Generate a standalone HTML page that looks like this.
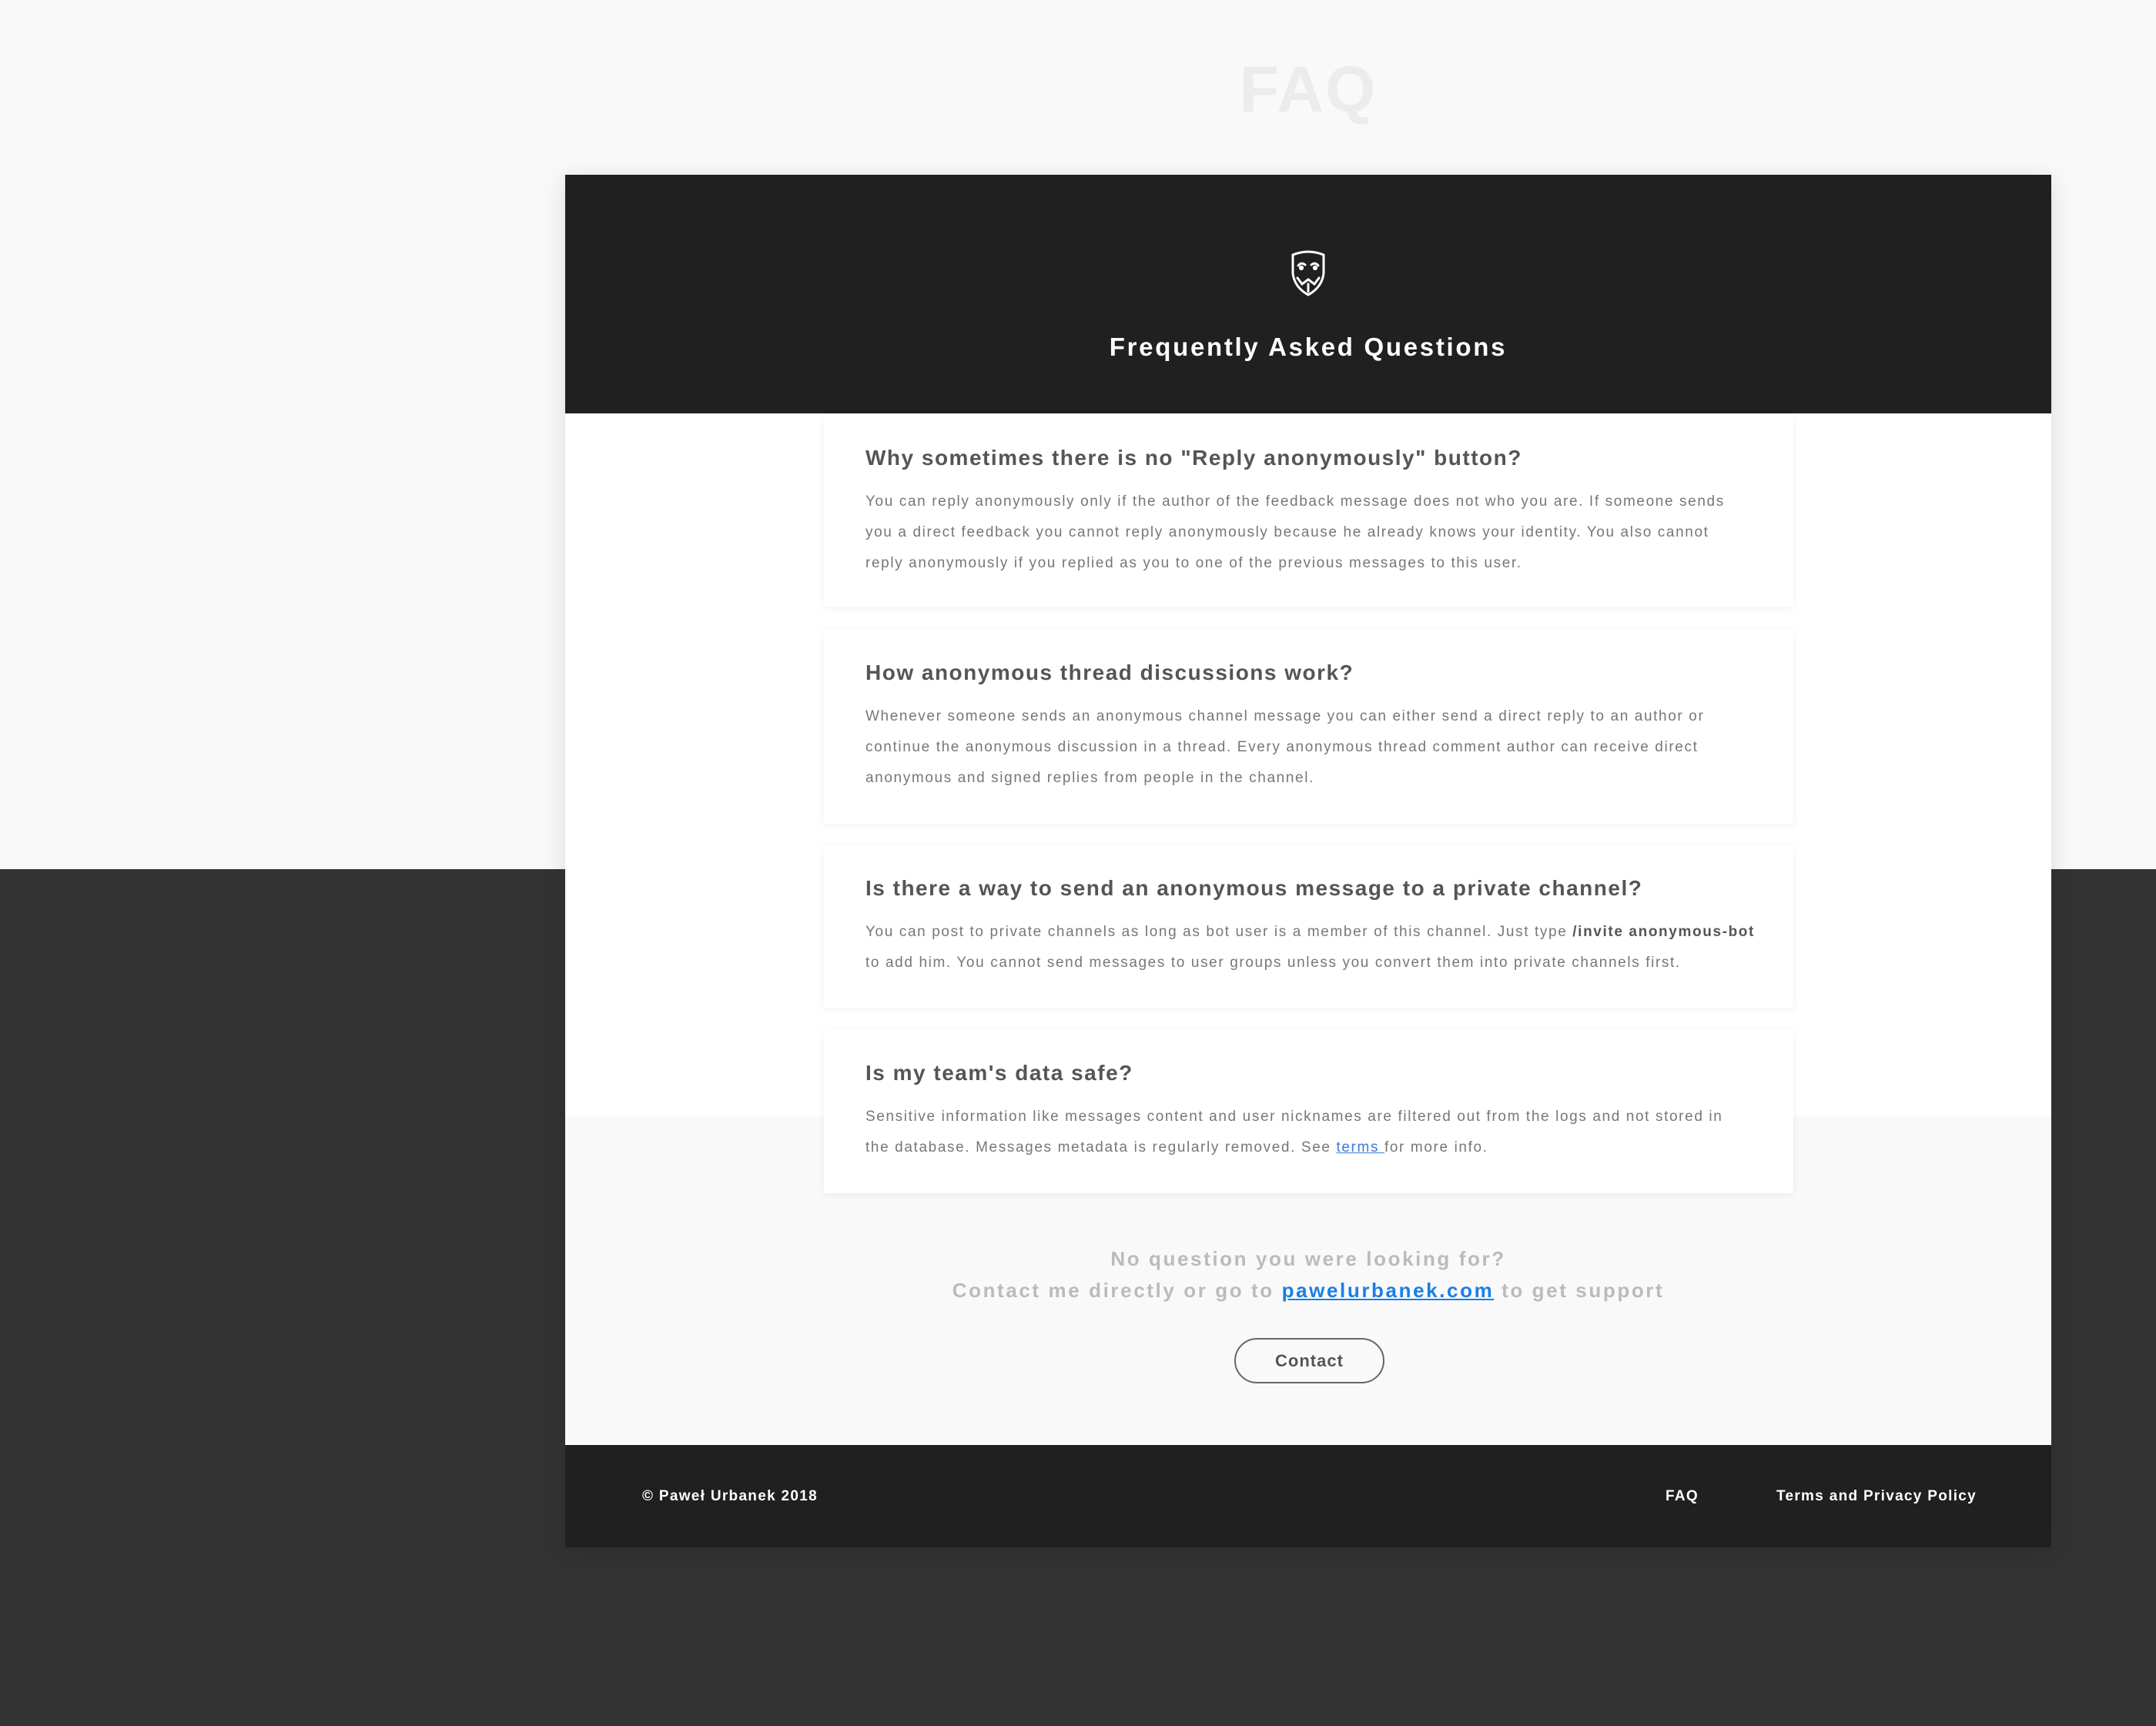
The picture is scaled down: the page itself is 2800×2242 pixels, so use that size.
<!DOCTYPE html>
<html><head><meta charset="utf-8"><style>
*{margin:0;padding:0;box-sizing:border-box}
body{width:2800px;height:2242px;position:relative;font-family:"Liberation Sans",sans-serif;background:#333;overflow:hidden}
.top{position:absolute;left:0;top:0;width:2800px;height:1129px;background:#f9f9f9}
.faqt{position:absolute;left:734px;width:1930px;top:68px;text-align:center;font-size:84px;font-weight:bold;color:#ececec;letter-spacing:2px}
.frame{position:absolute;left:734px;top:227px;width:1930px;height:1783px;background:#f9f9f9;box-shadow:0 6px 30px rgba(0,0,0,.12)}
.hdr{position:absolute;left:0;top:0;width:1930px;height:310px;background:#202020}
.hdr h1{position:absolute;top:205px;width:100%;text-align:center;color:#fff;font-size:33px;letter-spacing:2.7px;font-weight:bold}
.white{position:absolute;left:0;top:310px;width:1930px;height:913px;background:#fff}
.card{position:absolute;left:336px;width:1259px;background:#fff;box-shadow:0 2px 10px rgba(0,0,0,.06);padding:0 0 0 54px}
.card h2{position:absolute;left:54px;font-size:28px;letter-spacing:1.5px;color:#555;font-weight:bold;white-space:nowrap}
.card p{position:absolute;left:54px;font-size:19px;letter-spacing:1.62px;line-height:40px;color:#777;white-space:nowrap}
.card b{color:#555}
.card a{color:#3a7bd5;text-decoration:underline}
.cta{position:absolute;left:0;width:1930px;text-align:center;color:#bbb;font-size:26px;font-weight:bold;letter-spacing:2.6px}
.cta a{color:#1a7fe6;text-decoration:underline}
.btn{position:absolute;left:869px;top:1511px;width:195px;height:59px;border:2px solid #666;border-radius:30px;text-align:center;line-height:55px;font-size:22px;font-weight:bold;color:#555;letter-spacing:1px}
.ftr{position:absolute;left:0;top:1650px;width:1930px;height:133px;background:#202020;color:#fff;font-size:19px;font-weight:bold;letter-spacing:1.3px}
.ftr span{position:absolute;top:56px}
</style></head><body>
<div class="top"></div>
<div class="faqt">FAQ</div>
<div class="frame">
 <div class="hdr">
  <svg style="position:absolute;left:941px;top:98px" width="48" height="60" viewBox="0 0 48 60" fill="none" stroke="#fff" stroke-width="3" stroke-linecap="round">
   <path d="M4 6 Q24 -2 44 6 L44 30 Q42 48 24 58 Q6 48 4 30 Z"/>
   <path d="M11 20 Q15 15 20 19"/><path d="M28 19 Q33 15 37 20"/>
   <circle cx="15" cy="23" r="1.6" fill="#fff"/><circle cx="33" cy="23" r="1.6" fill="#fff"/>
   <path d="M10 36 L16 44 L24 38 L32 44 L38 36"/><path d="M24 44 L24 54"/>
  </svg>
  <h1>Frequently Asked Questions</h1>
 </div>
 <div class="white"></div>
 <div class="card" style="top:312px;height:249px">
  <h2 style="top:40px">Why sometimes there is no "Reply anonymously" button?</h2>
  <p style="top:93px">You can reply anonymously only if the author of the feedback message does not who you are. If someone sends<br>you a direct feedback you cannot reply anonymously because he already knows your identity. You also cannot<br>reply anonymously if you replied as you to one of the previous messages to this user.</p>
 </div>
 <div class="card" style="top:591px;height:252px">
  <h2 style="top:40px">How anonymous thread discussions work?</h2>
  <p style="top:93px">Whenever someone sends an anonymous channel message you can either send a direct reply to an author or<br>continue the anonymous discussion in a thread. Every anonymous thread comment author can receive direct<br>anonymous and signed replies from people in the channel.</p>
 </div>
 <div class="card" style="top:871px;height:211px">
  <h2 style="top:40px">Is there a way to send an anonymous message to a private channel?</h2>
  <p style="top:93px">You can post to private channels as long as bot user is a member of this channel. Just type <b>/invite anonymous-bot</b><br>to add him. You cannot send messages to user groups unless you convert them into private channels first.</p>
 </div>
 <div class="card" style="top:1111px;height:212px">
  <h2 style="top:40px">Is my team's data safe?</h2>
  <p style="top:93px">Sensitive information like messages content and user nicknames are filtered out from the logs and not stored in<br>the database. Messages metadata is regularly removed. See <a>terms </a>for more info.</p>
 </div>
 <div class="cta" style="top:1393px">No question you were looking for?</div>
 <div class="cta" style="top:1434px">Contact me directly or go to <a>pawelurbanek.com</a> to get support</div>
 <div class="btn">Contact</div>
 <div class="ftr">
  <span style="left:100px">© Paweł Urbanek 2018</span>
  <span style="left:1429px">FAQ</span>
  <span style="left:1573px">Terms and Privacy Policy</span>
 </div>
</div>
</body></html>
